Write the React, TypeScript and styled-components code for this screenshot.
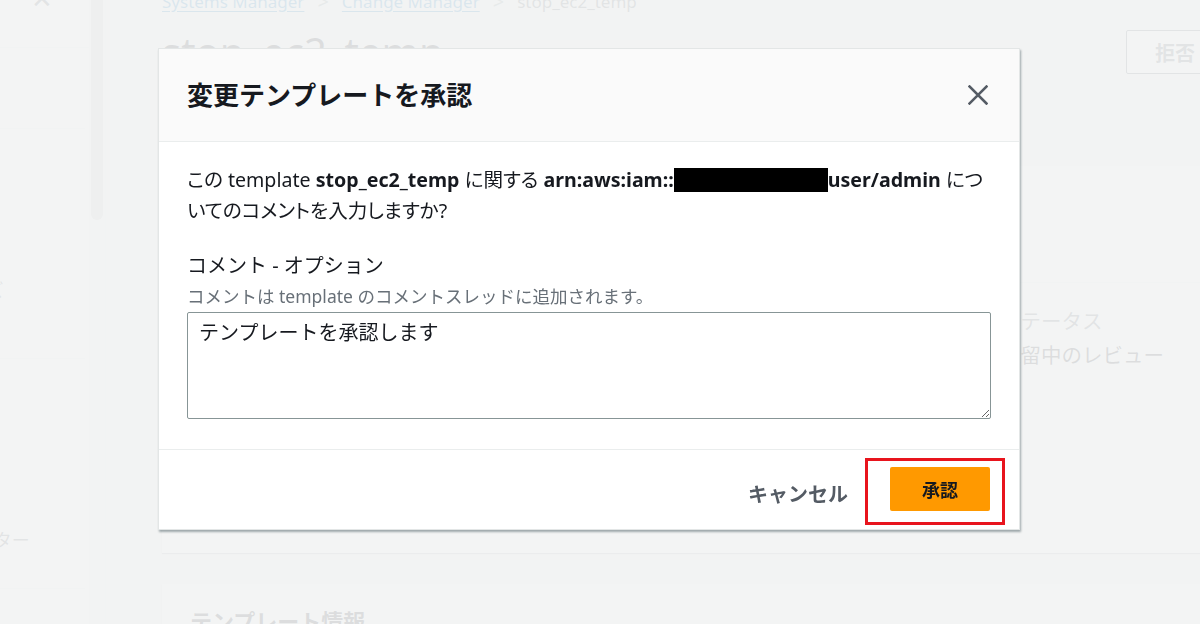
import React from "react";
import styled, { createGlobalStyle } from "styled-components";

const GlobalStyle = createGlobalStyle`
  html, body { margin: 0; padding: 0; }
  body {
    background: #f2f3f3;
    font-family: "Noto Sans", "Noto Sans CJK JP", sans-serif;
    color: #16191f;
    overflow: hidden;
  }
  * { box-sizing: border-box; }
`;

const Page = styled.div`
  display: flex;
  width: 1200px;
  height: 624px;
  overflow: hidden;
  background: #f2f3f3;
`;

const Sidebar = styled.nav`
  width: 89px;
  flex: none;
  background: #ffffff;
  display: flex;
  flex-direction: column;
`;

const SideClose = styled.div`
  height: 62px;
  border-bottom: 1px solid #eaeded;
  display: flex;
  justify-content: flex-end;
  padding-right: 36px;
  margin-top: -14px;
  color: #545b64;
  font-size: 26px;
  line-height: 24px;
`;

const SideSection = styled.div<{ $h: number; $pad: number; $shift: number }>`
  height: ${(p) => p.$h}px;
  border-bottom: 1px solid #eaeded;
  margin-right: 4px;
  font-size: 18px;
  line-height: 24px;
  color: #545b64;
  white-space: nowrap;
  padding-top: ${(p) => p.$pad}px;
  margin-left: ${(p) => -p.$shift}px;
`;

const ScrollTrack = styled.div`
  width: 17px;
  flex: none;
  background: #f6f6f6;
  border-right: 1px solid #eaeded;
  display: flex;
  justify-content: center;
`;

const ScrollThumb = styled.div`
  width: 12px;
  height: 230px;
  margin-top: -10px;
  border-radius: 6px;
  background: #c8c8c8;
`;

const Main = styled.main`
  flex: 1;
  padding: 0 0 0 56px;
  display: flex;
  flex-direction: column;
`;

const Breadcrumb = styled.div`
  display: flex;
  align-items: center;
  gap: 13px;
  margin-top: -12px;
  height: 26px;
  font-size: 17px;
  color: #545b64;
`;

const Crumb = styled.a`
  color: #0073bb;
  text-decoration: underline;
  text-underline-offset: 3px;
`;

const Sep = styled.span`
  color: #879596;
  font-size: 20px;
`;

const TitleRow = styled.div`
  display: flex;
  align-items: center;
  justify-content: space-between;
  margin-top: 16px;
`;

const PageTitle = styled.h1`
  margin: 0;
  font-size: 40px;
  font-weight: 400;
  line-height: 44px;
`;

const OutlineButton = styled.button`
  width: 100px;
  height: 44px;
  margin-right: -26px;
  background: #ffffff;
  border: 1px solid #545b64;
  border-radius: 2px;
  font-family: inherit;
  font-size: 20px;
  font-weight: 700;
  color: #545b64;
  text-align: left;
  padding-left: 28px;
`;

const Card = styled.section<{ $top: number; $h: number }>`
  margin-top: ${(p) => p.$top}px;
  height: ${(p) => p.$h}px;
  background: #ffffff;
  box-shadow: 0 1px 1px rgba(0, 28, 36, 0.3);
  flex: none;
`;

const CardHeader = styled.div`
  height: 117px;
  border-bottom: 1px solid #eaeded;
  padding: 22px 28px;
  font-size: 24px;
  font-weight: 700;
`;

const CardGrid = styled.div`
  display: grid;
  grid-template-columns: 1fr 172px;
  padding: 24px 28px 0;
`;

const Field = styled.div`
  display: flex;
  flex-direction: column;
  gap: 6px;
  font-size: 20.5px;
  line-height: 28px;
  white-space: nowrap;
`;

const FieldLabel = styled.div`
  color: #545b64;
`;

const SectionTitle = styled.h2`
  margin: 0;
  padding: 20px 28px;
  font-size: 22px;
  font-weight: 700;
`;

const Overlay = styled.div`
  position: fixed;
  inset: 0;
  background: rgba(242, 243, 243, 0.9);
`;

const Modal = styled.div`
  position: fixed;
  left: 158px;
  top: 48px;
  width: 862px;
  background: #ffffff;
  border: 1px solid #e3e6e6;
  box-shadow: 1px 2px 2px rgba(0, 28, 36, 0.35);
  display: flex;
  flex-direction: column;
`;

const ModalHeader = styled.header`
  height: 93px;
  background: #fafafa;
  border-bottom: 1px solid #eaeded;
  display: flex;
  align-items: center;
  justify-content: space-between;
  padding: 0 31px 0 28px;
`;

const ModalTitle = styled.h2`
  margin: 0;
  font-size: 26px;
  font-weight: 700;
  line-height: 32px;
  color: #16191f;
`;

const CloseButton = styled.button`
  width: 20px;
  height: 20px;
  padding: 0;
  border: none;
  background: none;
  display: flex;
  align-items: center;
  justify-content: center;
  color: #545b64;
`;

const ModalBody = styled.div`
  padding: 22px 28px 30px;
  display: flex;
  flex-direction: column;
`;

const Message = styled.p`
  margin: 0;
  font-size: 19.6px;
  line-height: 31px;
  font-feature-settings: "palt";
  color: #16191f;
  width: 798px;
`;

const Strong = styled.b`
  font-weight: 700;
`;

const Redacted = styled.span`
  display: inline-block;
  width: 154px;
  height: 24px;
  background: #000000;
  vertical-align: -5px;
`;

const FormField = styled.div`
  margin-top: 25px;
  display: flex;
  flex-direction: column;
`;

const Label = styled.label`
  font-size: 20px;
  line-height: 30px;
  color: #16191f;
`;

const Description = styled.div`
  font-size: 17.5px;
  line-height: 24px;
  color: #687078;
  margin-top: 3px;
`;

const TextArea = styled.textarea`
  margin-top: 4px;
  width: 804px;
  height: 107px;
  border: 1px solid #879596;
  border-radius: 2px;
  padding: 6px 11px;
  font-family: "Noto Sans", "Noto Sans CJK JP", sans-serif;
  font-size: 20px;
  line-height: 28px;
  color: #16191f;
  resize: vertical;
  outline: none;
`;

const ModalFooter = styled.footer`
  height: 80px;
  border-top: 1px solid #eaeded;
  display: flex;
  align-items: flex-start;
  justify-content: flex-end;
  gap: 17px;
  padding: 8px 14px 0 0;
`;

const LinkButton = styled.button`
  align-self: center;
  border: none;
  background: none;
  font-family: inherit;
  font-size: 20px;
  font-weight: 700;
  color: #545b64;
  padding: 0;
`;

const Highlight = styled.div`
  border: 3px solid #e8141d;
  padding: 6px 12px 11px 22px;
`;

const PrimaryButton = styled.button`
  width: 100px;
  height: 44px;
  border: none;
  border-radius: 2px;
  background: #ff9900;
  font-family: inherit;
  font-size: 18px;
  font-weight: 700;
  color: #16191f;
`;

const CloseIcon = () => (
  <svg width="20" height="20" viewBox="0 0 20 20" fill="none">
    <path d="M1.5 1.5 L18.5 18.5 M18.5 1.5 L1.5 18.5" stroke="currentColor" strokeWidth="2.5" strokeLinecap="square" />
  </svg>
);

export default function App() {
  return (
    <>
      <GlobalStyle />
      <Page>
        <Sidebar>
          <SideClose>✕</SideClose>
          <SideSection $h={81} $pad={0} $shift={14} />
          <SideSection $h={230} $pad={149} $shift={50}>サイズ</SideSection>
          <SideSection $h={230} $pad={169} $shift={60}>フィルター</SideSection>
        </Sidebar>
        <ScrollTrack>
          <ScrollThumb />
        </ScrollTrack>
        <Main>
          <Breadcrumb>
            <Crumb>Systems Manager</Crumb>
            <Sep>&gt;</Sep>
            <Crumb>Change Manager</Crumb>
            <Sep>&gt;</Sep>
            <span>stop_ec2_temp</span>
          </Breadcrumb>
          <TitleRow>
            <PageTitle>stop_ec2_temp</PageTitle>
            <OutlineButton>拒否</OutlineButton>
          </TitleRow>
          <Card $top={92} $h={387}>
            <CardHeader>概要</CardHeader>
            <CardGrid>
              <span />
              <Field>
                <FieldLabel>ステータス</FieldLabel>
                <div>保留中のレビュー</div>
              </Field>
            </CardGrid>
          </Card>
          <Card $top={31} $h={200}>
            <SectionTitle>テンプレート情報</SectionTitle>
          </Card>
        </Main>
      </Page>
      <Overlay />
      <Modal role="dialog">
        <ModalHeader>
          <ModalTitle>変更テンプレートを承認</ModalTitle>
          <CloseButton aria-label="close">
            <CloseIcon />
          </CloseButton>
        </ModalHeader>
        <ModalBody>
          <Message>
            この template <Strong>stop_ec2_temp</Strong> に関する <Strong>arn:aws:iam::<Redacted />user/admin</Strong> についてのコメントを入力しますか?
          </Message>
          <FormField>
            <Label>コメント - オプション</Label>
            <Description>コメントは template のコメントスレッドに追加されます。</Description>
            <TextArea defaultValue="テンプレートを承認します" />
          </FormField>
        </ModalBody>
        <ModalFooter>
          <LinkButton>キャンセル</LinkButton>
          <Highlight>
            <PrimaryButton>承認</PrimaryButton>
          </Highlight>
        </ModalFooter>
      </Modal>
    </>
  );
}
